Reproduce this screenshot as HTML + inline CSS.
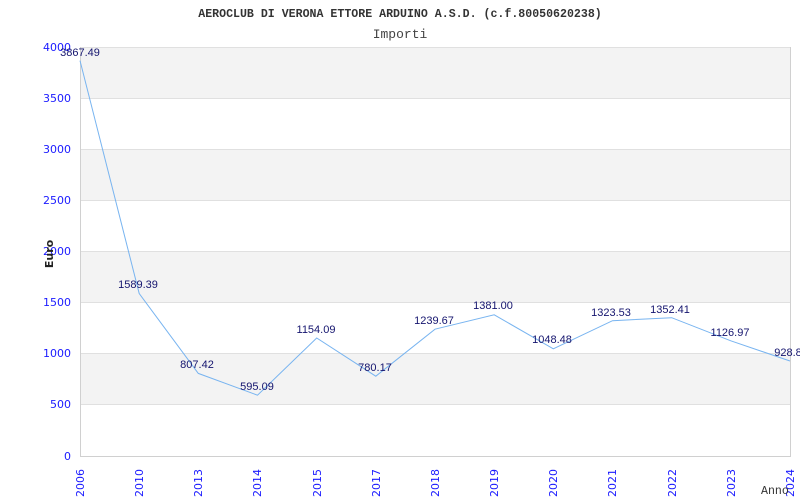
<!DOCTYPE html>
<html><head><meta charset="utf-8"><style>
html,body{margin:0;padding:0;background:#fff;width:800px;height:500px;overflow:hidden}
svg{display:block}
.yl{font-family:"DejaVu Sans",sans-serif;font-size:11px;fill:#1a1aff}
.xl{font-family:"DejaVu Sans",sans-serif;font-size:11px;fill:#1a1aff}
.dl{font-family:"Liberation Sans",sans-serif;font-size:11px;fill:#14146e}
</style></head><body>
<svg width="800" height="500" xmlns="http://www.w3.org/2000/svg">
<text x="400" y="17" text-anchor="middle" font-family="Liberation Mono,monospace" font-weight="bold" font-size="11.6" fill="#333">AEROCLUB DI VERONA ETTORE ARDUINO A.S.D. (c.f.80050620238)</text>
<text x="400" y="38" text-anchor="middle" font-family="Liberation Mono,monospace" font-size="13" fill="#444">Importi</text>
<rect x="80" y="47" width="710" height="51" fill="#f3f3f3"/>
<rect x="80" y="149" width="710" height="51" fill="#f3f3f3"/>
<rect x="80" y="251" width="710" height="52" fill="#f3f3f3"/>
<rect x="80" y="354" width="710" height="51" fill="#f3f3f3"/>
<g stroke="#e0e0e0" stroke-width="1">
<line x1="80" y1="47.5" x2="790" y2="47.5"/>
<line x1="80" y1="98.5" x2="790" y2="98.5"/>
<line x1="80" y1="149.5" x2="790" y2="149.5"/>
<line x1="80" y1="200.5" x2="790" y2="200.5"/>
<line x1="80" y1="251.5" x2="790" y2="251.5"/>
<line x1="80" y1="302.5" x2="790" y2="302.5"/>
<line x1="80" y1="353.5" x2="790" y2="353.5"/>
<line x1="80" y1="404.5" x2="790" y2="404.5"/>
</g>
<g stroke="#d0d0d0" stroke-width="1" fill="none">
<line x1="80.5" y1="47" x2="80.5" y2="456"/>
<line x1="790.5" y1="47" x2="790.5" y2="456"/>
<line x1="80" y1="456.5" x2="791" y2="456.5"/>
</g>
<g class="yl" text-anchor="end">
<text x="71" y="51">4000</text><text x="71" y="102">3500</text><text x="71" y="153">3000</text><text x="71" y="204">2500</text><text x="71" y="255">2000</text><text x="71" y="306">1500</text><text x="71" y="357">1000</text><text x="71" y="408">500</text><text x="71" y="460">0</text>
</g>
<text transform="translate(53,254) rotate(-90)" text-anchor="middle" font-family="DejaVu Sans,sans-serif" font-weight="bold" font-size="11" fill="#222">Euro</text>
<polyline fill="none" stroke="#78b4f0" stroke-width="1" points="80,60.6 139.2,293.5 198.3,373.4 257.5,395.2 316.7,338 375.8,376.2 435,329.2 494.2,314.8 553.3,348.8 612.5,320.7 671.7,317.7 730.8,340.8 790,361"/>
<g class="dl" text-anchor="middle">
<text x="80" y="56">3867.49</text>
<text x="138" y="288">1589.39</text>
<text x="197" y="368">807.42</text>
<text x="257" y="390">595.09</text>
<text x="316" y="333">1154.09</text>
<text x="375" y="371">780.17</text>
<text x="434" y="324">1239.67</text>
<text x="493" y="309">1381.00</text>
<text x="552" y="343">1048.48</text>
<text x="611" y="316">1323.53</text>
<text x="670" y="313">1352.41</text>
<text x="730" y="336">1126.97</text>
<text x="788" y="356">928.8</text>
</g>
<g class="xl">
<text transform="translate(84,497) rotate(-90)">2006</text>
<text transform="translate(143,497) rotate(-90)">2010</text>
<text transform="translate(202,497) rotate(-90)">2013</text>
<text transform="translate(261,497) rotate(-90)">2014</text>
<text transform="translate(321,497) rotate(-90)">2015</text>
<text transform="translate(380,497) rotate(-90)">2017</text>
<text transform="translate(439,497) rotate(-90)">2018</text>
<text transform="translate(498,497) rotate(-90)">2019</text>
<text transform="translate(557,497) rotate(-90)">2020</text>
<text transform="translate(616,497) rotate(-90)">2021</text>
<text transform="translate(676,497) rotate(-90)">2022</text>
<text transform="translate(735,497) rotate(-90)">2023</text>
<text transform="translate(794,497) rotate(-90)">2024</text>
</g>
<text x="761" y="494" font-family="Liberation Mono,monospace" font-size="11.6" fill="#333">Anno</text>
</svg>
</body></html>
